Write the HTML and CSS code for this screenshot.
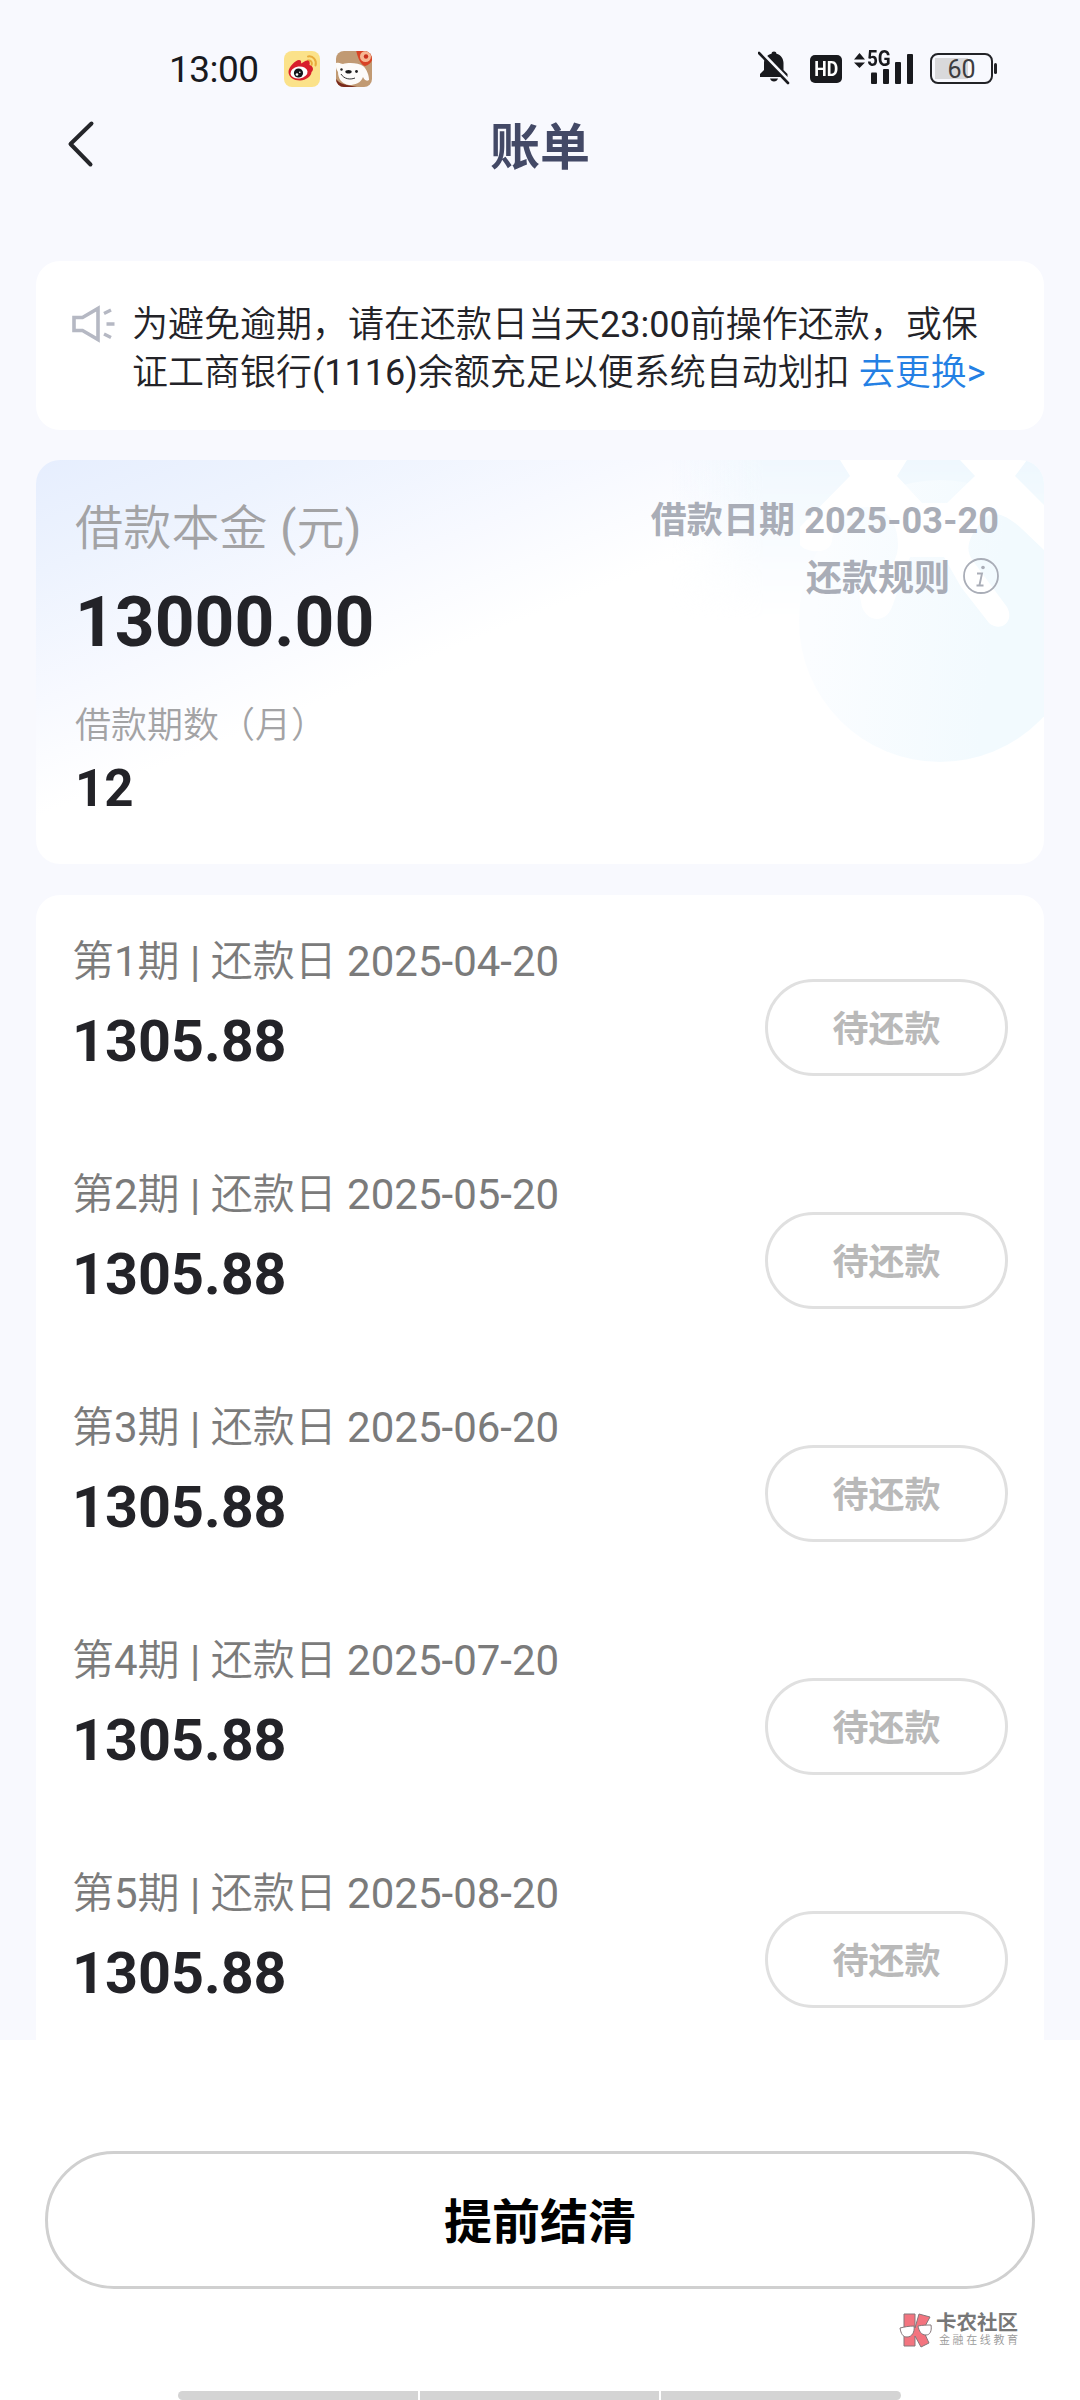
FILE: index.html
```html
<!DOCTYPE html>
<html lang="zh-CN">
<head>
<meta charset="utf-8">
<title>账单</title>
<link rel="stylesheet" href="styles.css">
</head>
<body>
<div class="screen">
  <header class="status">
    <span class="clock">13:00</span>
    <svg class="app-icon" viewBox="0 0 36 36">
      <rect width="36" height="36" rx="8" fill="#fbe28a"/>
      <path d="M24 5.500c5-1 9 3.500 7.500 9M24 9.500c2.500-.5 4.500 1.500 3.700 4.200" fill="none" stroke="#e9ac3c" stroke-width="2" stroke-linecap="round"/>
      <path d="M4.500 21c0-5 7-12 10.500-12 2 0 2.500 1.500 2 3.500 3-2 5-3.500 7-3 2 .5 2 3 1.500 4.500 4 1 4.500 5 2 7 0 4-5.500 8.500-11.500 8.500S4.500 26 4.500 21z" fill="#d81e2c"/>
      <ellipse cx="15" cy="21.500" rx="8.600" ry="6" fill="#fff" transform="rotate(-8 15 21.500)"/>
      <circle cx="14.500" cy="22" r="4.600" fill="#15151a"/>
      <circle cx="13" cy="23.500" r="1.300" fill="#fff"/><circle cx="15.800" cy="21.300" r=".8" fill="#fff"/>
    </svg>
    <svg class="app-icon" viewBox="0 0 36 36">
      <clipPath id="tile"><rect width="36" height="36" rx="8"/></clipPath>
      <g clip-path="url(#tile)">
        <rect width="36" height="36" fill="#c19a73"/>
        <path d="M0 28c3 4 7 5 11 6l10 2H0z" fill="#7a2a1c"/>
        <path d="M20-1c2 9 5 15 9 16 4-1 7-4 8-9V-1z" fill="#d84325"/>
        <circle cx="29.500" cy="5.500" r="5.500" fill="#f6b793"/><circle cx="30" cy="5.500" r="2.200" fill="#c9301e"/>
        <path d="M0 12c4-1 5 1 7 1 6-2 16-1 20 2 4 3 6 10 6 14-3 2-5-1-6-3-2 6-8 8-14 8C6 33 2 28 2 21c-1-2-2-3-2-5z" fill="#fdfbf9"/>
        <circle cx="5.500" cy="18.500" r="1.200" fill="#222"/><circle cx="20.500" cy="20.500" r="1.400" fill="#222"/>
        <ellipse cx="12.500" cy="20.800" rx="3.200" ry="1.800" fill="#1b1b1b"/>
        <path d="M5 23c3 5 9 6 14 4" fill="none" stroke="#333" stroke-width="1"/>
      </g>
    </svg>
    <svg class="bell" viewBox="0 0 32 34">
      <path d="M16 0.500c1.500 0 2.300.8 2.500 2.200C23 4 25.500 7.500 25.500 12v7l4 4v3H2v-3l4-4v-7c0-4.500 3-8 7.500-9.300.2-1.400 1-2.200 2.500-2.200zM12 27.500h8c-.7 2-2 3-4 3s-3.300-1-4-3z" fill="#191a1e"/>
      <path d="M2.500 0.500L31 30" stroke="#f8f9fe" stroke-width="3.600"/>
      <path d="M1 2l29 30" stroke="#191a1e" stroke-width="2.600" stroke-linecap="round"/>
    </svg>
    <span class="hd"><span>HD</span></span>
    <span class="signal">
      <svg viewBox="0 0 60 34">
        <path d="M0 8.500L5.500 2 11 8.500zM0 11.500h11L5.500 17z" fill="#191a1e"/>
        <g fill="#191a1e"><rect x="17" y="21.500" width="6" height="11.500" rx="1"/><rect x="29" y="18" width="6" height="15" rx="1"/><rect x="41" y="11" width="6" height="22" rx="1"/><rect x="53" y="3" width="6" height="30" rx="1"/></g>
      </svg>
      <span class="net">5G</span>
    </span>
    <span class="battery"><span>60</span></span>
  </header>

  <nav class="navbar">
    <svg class="back" viewBox="0 0 28 48"><path d="M24.500 3.500L3.500 24l20 20.500" fill="none" stroke="#25262a" stroke-width="4" stroke-linecap="round" stroke-linejoin="round"/></svg>
    <h1>账单</h1>
  </nav>

  <main class="content">
    <section class="card notice">
      <svg class="horn" viewBox="0 0 44 38"><path d="M2 12.500h8.500L26 3.500v31l-15.500-9H2z" fill="none" stroke="#b5b8c3" stroke-width="3.600"/><path d="M32 8.500l7-3.500M34.500 19h8M32 29l7 3.500" stroke="#b5b8c3" stroke-width="3.400"/></svg>
      <p>为避免逾期，请在还款日当天23:00前操作还款，或保<br>证工商银行(1116)余额充足以便系统自动划扣 <a>去更换&gt;</a></p>
    </section>

    <section class="card summary">
      <svg class="pattern" viewBox="0 0 1008 405">
        <defs>
          <linearGradient id="tint" x1="634" y1="0" x2="1008" y2="0" gradientUnits="userSpaceOnUse"><stop offset="0" stop-color="#f0f7fe" stop-opacity="0"/><stop offset=".25" stop-color="#f1f8fe"/><stop offset="1" stop-color="#eef8fe"/></linearGradient>
          <linearGradient id="ball" x1="780" y1="130" x2="960" y2="150" gradientUnits="userSpaceOnUse"><stop offset="0" stop-color="#fbfdff"/><stop offset="1" stop-color="#f2fafe"/></linearGradient>
          <linearGradient id="fade" x1="0" y1="0" x2="0" y2="160" gradientUnits="userSpaceOnUse"><stop offset="0" stop-color="#fff"/><stop offset="1" stop-color="#000"/></linearGradient>
          <mask id="down"><rect width="1008" height="405" fill="url(#fade)"/></mask>
        </defs>
        <rect x="634" width="374" height="160" fill="url(#tint)" mask="url(#down)"/>
        <circle cx="904" cy="161" r="141" fill="url(#ball)"/>
        <path fill="#fff" d="M804 0h67l-10 16 25 27h25l28-27-15-16h67l-12 16 29 29v45l-22-21c-14-13-30-22-40-8-13 16-18 28-9 40l34 46c8 14-6 26-18 16l-28-36-17-30h-34l-18 50c-6 16-24 16-30 0l-4-20c22-4 40-22 40-42 0-24-12-38-32-38s-32 14-34 34c-2 14-26 12-32 4V67l50-51z"/>
      </svg>
      <div class="loan">
        <div class="principal-label">借款本金 (元)</div>
        <div class="principal">13000.00</div>
        <div class="term-label">借款期数（月）</div>
        <div class="term">12</div>
      </div>
      <div class="meta">
        <div class="date">借款日期 2025-03-20</div>
        <div class="rule">还款规则
          <svg class="info" viewBox="0 0 36 36"><circle cx="18" cy="18" r="17" fill="none" stroke="#a9adb7" stroke-width="1.800"/><circle cx="20" cy="9.500" r="1.800" fill="#a9adb7"/><path d="M14 15.500h5l-2.500 11.500M13.500 27.500h7" fill="none" stroke="#a9adb7" stroke-width="1.900"/></svg>
        </div>
      </div>
    </section>

    <section class="card list">
      <article class="row"><div><div class="due">第1期 | 还款日 2025-04-20</div><div class="amount">1305.88</div></div><span class="pill">待还款</span></article>
      <article class="row"><div><div class="due">第2期 | 还款日 2025-05-20</div><div class="amount">1305.88</div></div><span class="pill">待还款</span></article>
      <article class="row"><div><div class="due">第3期 | 还款日 2025-06-20</div><div class="amount">1305.88</div></div><span class="pill">待还款</span></article>
      <article class="row"><div><div class="due">第4期 | 还款日 2025-07-20</div><div class="amount">1305.88</div></div><span class="pill">待还款</span></article>
      <article class="row"><div><div class="due">第5期 | 还款日 2025-08-20</div><div class="amount">1305.88</div></div><span class="pill">待还款</span></article>
    </section>
  </main>

  <footer class="footer">
    <button class="settle">提前结清</button>
    <div class="brand">
      <svg viewBox="0 0 34 35"><g stroke="#85777a" stroke-width="1" fill="#f3747f"><path d="M5 1h11v14l4-14 11 3-7 13 6 13-8 4-6-11v10H5z"/><path d="M1 15c4-1 9-2 14-2 1 6-2 11-7 11-4 0-6-3-7-9zM19 13c5-1 9-1 13-1 1 6-1 10-5 10-5 0-7-4-8-9z" fill="#fff"/></g></svg>
      <div><div class="brand-name">卡农社区</div><div class="brand-sub">金融在线教育</div></div>
    </div>
    <div class="gesture"><i></i><i></i><i></i></div>
  </footer>
</div>
</body>
</html>
```
FILE: styles.css
```css
* { box-sizing: border-box; }
body { margin: 0; font-family: Roboto, "Noto Sans CJK SC DemiLight", "Noto Sans CJK SC", sans-serif; color: #232328; }
.screen { width: 1080px; height: 2400px; overflow: hidden; display: flex; flex-direction: column; background: #f8f9fe; }
.screen svg { display: block; flex: none; }
h1, .meta, .pill, .settle, .brand-name { font-family: Roboto, "Noto Sans CJK SC", sans-serif; font-weight: 700; }

.status { height: 100px; flex: none; padding: 51px 83px 0 169px; display: flex; align-items: flex-start; color: #191a1e; }
.clock { width: 115px; font-size: 37px; line-height: 37px; letter-spacing: -0.5px; }
.app-icon { width: 36px; height: 36px; margin-right: 16px; }
.bell { width: 32px; height: 34px; margin-left: 370px; }
.hd { width: 32px; height: 28px; margin: 4px 0 0 20px; border-radius: 5px; background: #191a1e; color: #fff; font-size: 21px; font-weight: 700; line-height: 28px; display: flex; justify-content: center; }
.hd span { transform: scaleX(.84); }
.signal { position: relative; width: 60px; height: 34px; margin-left: 12px; }
.signal svg { width: 60px; height: 34px; }
.net { position: absolute; left: 13px; top: -2px; font-size: 22px; line-height: 20px; font-weight: 700; transform: scaleX(.86); transform-origin: 0 0; }
.battery { position: relative; width: 63px; height: 31px; margin: 2px 0 0 16px; border: 2px solid #222327; border-radius: 8px; padding: 2px; display: flex; color: #3d3d40; font-size: 25px; line-height: 25px; justify-content: center; background: linear-gradient(#d9d9db, #d9d9db) 3px 3px / 33px 21px no-repeat; }
.battery::after { content: ""; position: absolute; left: 62px; top: 8px; width: 3px; height: 11px; border-radius: 2px; background: #222327; }

.navbar { height: 161px; flex: none; display: grid; grid-template-columns: 1fr auto 1fr; align-items: start; padding: 18px 67px 0; }
.back { width: 28px; height: 48px; margin-top: 2px; }
h1 { margin: 0; font-size: 50px; line-height: 60px; color: #434966; }

.content { height: 1779px; flex: none; overflow: hidden; padding: 0 36px; display: flex; flex-direction: column; gap: 30px; }
.card { background: #fff; border-radius: 24px; flex: none; }
.notice { height: 169px; display: flex; padding: 40px 35px 0 36px; gap: 16px; }
.horn { width: 44px; height: 38px; margin-top: 4px; }
.notice p { margin: 0; font-size: 36px; line-height: 48px; white-space: nowrap; }
.notice a { color: #2480e4; }

.summary { position: relative; overflow: hidden; height: 404px; margin-bottom: 1px; padding: 37px 45px 0 39px; display: flex; justify-content: space-between; background: linear-gradient(158deg, #e6eefe 0, #edf3fe 14%, #f7f9ff 30%, #fff 44%); }
.pattern { position: absolute; left: 0; top: 0; width: 1008px; height: 405px; }
.loan, .meta { position: relative; white-space: nowrap; }
.principal-label { font-size: 48px; line-height: 64px; letter-spacing: 0.200px; color: #a3a3a5; }
.principal { margin-top: 21px; font-size: 69.500px; line-height: 82px; font-weight: 700; }
.term-label { margin-top: 38px; font-size: 36px; line-height: 48px; color: #a3a3a5; }
.term { margin-top: 9px; font-size: 51px; line-height: 60px; font-weight: 700; }
.meta { font-size: 36px; line-height: 48px; color: #a9adb7; display: flex; flex-direction: column; align-items: flex-end; gap: 10px; }
.date { letter-spacing: 0.120px; }
.rule { display: flex; align-items: center; gap: 13px; }
.info { width: 36px; height: 36px; margin-top: -6px; }

.list { border-radius: 24px 24px 0 0; }
.row { height: 233px; padding: 39px 36px 0 36px; display: flex; justify-content: space-between; align-items: flex-start; }
.due { font-size: 42px; line-height: 56px; color: #7b7b7b; white-space: nowrap; }
.amount { margin-top: 18px; font-size: 57.500px; line-height: 68px; font-weight: 700; }
.pill { width: 243px; height: 97px; margin-top: 45px; border: 3px solid #e0e0e0; border-radius: 49px; display: flex; align-items: center; justify-content: center; font-size: 36px; line-height: 48px; padding-top: 5px; color: #b9b9b9; }

.footer { height: 360px; flex: none; background: #fff; padding: 111px 45px 0; display: flex; flex-direction: column; }
.settle { width: 990px; height: 138px; flex: none; border: 3px solid #d0d0d0; border-radius: 69px; background: #fff; font-size: 48px; line-height: 60px; color: #000; padding: 5px 0 0; }
.brand { display: flex; gap: 3px; align-self: flex-end; margin: 24px 17px 0 0; height: 35px; }
.brand svg { width: 34px; height: 35px; }
.brand-name { font-size: 20.500px; line-height: 21px; color: #777; white-space: nowrap; }
.brand-sub { font-size: 11px; line-height: 12px; letter-spacing: 2.600px; margin: 1px -3px 0 3px; color: #999; white-space: nowrap; }
.gesture { display: flex; gap: 2px; width: 723px; height: 9px; margin: 43px 0 0 133px; border-radius: 5px; overflow: hidden; }
.gesture i { flex: 1; background: #d4d4d4; }
```
